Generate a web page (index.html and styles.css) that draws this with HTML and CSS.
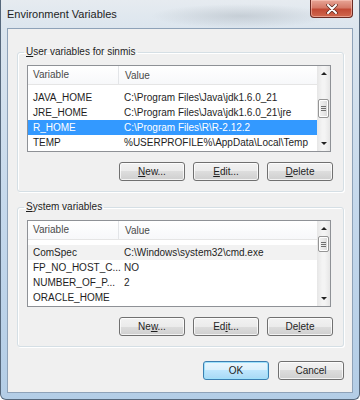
FILE: index.html
```html
<!DOCTYPE html>
<html lang="en">
<head>
  <meta charset="UTF-8" />
  <title>Environment Variables</title>
  <link rel="stylesheet" href="styles.css">
</head>
<body>
  <div class="window">
    <div class="titlebar">
      <span class="title">Environment Variables</span>
      <button class="close" title="Close">
        <svg width="12" height="10" viewBox="0 0 12 10">
          <path d="M2 1 L10 9 M10 1 L2 9" stroke="#5a2a20" stroke-width="3.4" stroke-linecap="round" />
          <path d="M2 1 L10 9 M10 1 L2 9" stroke="#fff" stroke-width="2" stroke-linecap="round" />
        </svg>
      </button>
    </div>

    <div class="client">
      <fieldset class="group">
        <legend><u>U</u>ser variables for sinmis</legend>
        <div class="list">
          <div class="list-body">
            <div class="header">
              <span class="col-var">Variable</span>
              <span class="col-val">Value</span>
            </div>
            <div class="row"><span class="col-var">JAVA_HOME</span><span class="col-val">C:\Program Files\Java\jdk1.6.0_21</span></div>
            <div class="row"><span class="col-var">JRE_HOME</span><span class="col-val">C:\Program Files\Java\jdk1.6.0_21\jre</span></div>
            <div class="row selected"><span class="col-var">R_HOME</span><span class="col-val">C:\Program Files\R\R-2.12.2</span></div>
            <div class="row"><span class="col-var">TEMP</span><span class="col-val">%USERPROFILE%\AppData\Local\Temp</span></div>
          </div>
          <div class="scrollbar">
            <span class="arrow up"></span>
            <div class="track track-mid"><span class="thumb"><i></i><i></i><i></i></span></div>
            <span class="arrow down"></span>
          </div>
        </div>
        <div class="buttons">
          <button class="btn"><u>N</u>ew...</button>
          <button class="btn"><u>E</u>dit...</button>
          <button class="btn"><u>D</u>elete</button>
        </div>
      </fieldset>

      <fieldset class="group">
        <legend><u>S</u>ystem variables</legend>
        <div class="list">
          <div class="list-body">
            <div class="header">
              <span class="col-var">Variable</span>
              <span class="col-val">Value</span>
            </div>
            <div class="row current"><span class="col-var">ComSpec</span><span class="col-val">C:\Windows\system32\cmd.exe</span></div>
            <div class="row"><span class="col-var">FP_NO_HOST_C...</span><span class="col-val">NO</span></div>
            <div class="row"><span class="col-var">NUMBER_OF_P...</span><span class="col-val">2</span></div>
            <div class="row"><span class="col-var">ORACLE_HOME</span><span class="col-val"></span></div>
          </div>
          <div class="scrollbar">
            <span class="arrow up"></span>
            <div class="track track-top"><span class="thumb"><i></i><i></i><i></i></span></div>
            <span class="arrow down"></span>
          </div>
        </div>
        <div class="buttons">
          <button class="btn">Ne<u>w</u>...</button>
          <button class="btn">Ed<u>i</u>t...</button>
          <button class="btn">De<u>l</u>ete</button>
        </div>
      </fieldset>

      <div class="dialog-buttons">
        <button class="btn default">OK</button>
        <button class="btn">Cancel</button>
      </div>
    </div>
  </div>
</body>
</html>
```

FILE: styles.css
```css
body {
  margin: 0;
  background: #fff;
  font-family: "Liberation Sans", Arial, sans-serif;
}

.window {
  width: 360px;
  height: 400px;
  box-sizing: border-box;
  border: 1px solid #56687c;
  border-top: none;
  border-radius: 0 0 6px 6px;
  background:
    radial-gradient(ellipse 90px 12px at 240px 16px, rgba(120, 130, 140, 0.25), transparent),
    linear-gradient(#e6ebf0 0px, #dbe5ee 30px, #c6d9ec 200px, #b3cde6 400px);
  display: flex;
  flex-direction: column;
}

.titlebar {
  height: 28px;
  display: flex;
  justify-content: space-between;
  align-items: flex-start;
  padding: 0 6px 0 6px;
}

.title {
  font-size: 11px;
  color: #1e1e1e;
  line-height: 28px;
}

.close {
  width: 43px;
  height: 18px;
  padding: 0;
  border: 1px solid #6b2a22;
  border-top: none;
  border-radius: 0 0 4px 4px;
  background: linear-gradient(#e8a596 0%, #d57a68 45%, #c24a35 55%, #d0684e 100%);
  box-shadow: inset 0 0 0 1px rgba(255, 210, 200, 0.5);
  display: flex;
  align-items: center;
  justify-content: center;
}

.client {
  flex: 1;
  margin: 0 6px 6px 6px;
  border: 1px solid #8ea2b8;
  background: #f0f0f0;
  padding: 16px 8px 0 9px;
  display: flex;
  flex-direction: column;
}

.group {
  margin: 0;
  padding: 6px 10px 10px 9px;
  border: 1px solid #d5dfe5;
  border-radius: 3px;
  box-shadow: inset 1px 1px 0 #fff, 1px 1px 0 #fff;
}

.group + .group {
  margin-top: 8px;
}

.group legend {
  margin-left: -3px;
  padding: 0 2px;
  font-size: 10px;
  line-height: 14px;
  color: #1e1e1e;
}

.list {
  height: 87px;
  box-sizing: border-box;
  border: 1px solid #8e9196;
  background: #fff;
  margin-right: 2px;
  display: flex;
}

.list-body {
  flex: 1;
  overflow: hidden;
  font-size: 10px;
  color: #1e1e1e;
}

.header {
  height: 18px;
  display: flex;
  align-items: center;
  border-bottom: 1px solid #e5e5e5;
  background: linear-gradient(#fff, #f7f8fa);
  color: #4a4a4a;
  margin-bottom: 5px;
}

.header .col-var {
  border-right: 1px solid #e3e5e8;
  height: 18px;
  line-height: 18px;
}

.row {
  height: 15px;
  display: flex;
  align-items: center;
  white-space: nowrap;
}

.col-var {
  width: 85px;
  padding-left: 5px;
  flex: none;
}

.col-val {
  padding-left: 6px;
}

.row.selected {
  background: #3399ff;
  color: #fff;
}

.row.current {
  background: #f2f2f2;
}

.scrollbar {
  width: 13px;
  flex: none;
  display: flex;
  flex-direction: column;
  background: linear-gradient(90deg, #e6e6e6, #f4f4f4 40%, #f4f4f4 60%, #e6e6e6);
}

.arrow {
  height: 15px;
  display: flex;
  align-items: center;
  justify-content: center;
}

.arrow::before {
  content: "";
  border-left: 3px solid transparent;
  border-right: 3px solid transparent;
}

.arrow.up::before {
  border-bottom: 3px solid #222;
}

.arrow.down::before {
  border-top: 3px solid #222;
}

.track {
  flex: 1;
  display: flex;
  flex-direction: column;
  padding: 0 1px;
}

.track-mid {
  justify-content: center;
}

.thumb {
  height: 19px;
  box-sizing: border-box;
  border: 1px solid #959595;
  border-radius: 2px;
  background: linear-gradient(90deg, #f3f3f3, #e8e8e8 50%, #d8d8d8);
  box-shadow: inset 0 0 0 1px #fff;
  display: flex;
  flex-direction: column;
  align-items: center;
  justify-content: center;
  gap: 1px;
}

.track-top .thumb {
  height: 16px;
}

.thumb i {
  width: 5px;
  height: 1px;
  background: #6f6f6f;
}

.buttons {
  margin-top: 10px;
  display: flex;
  justify-content: flex-end;
  gap: 8px;
}

.btn {
  width: 66px;
  height: 19px;
  padding: 0;
  border: 1px solid #707070;
  border-radius: 3px;
  background: linear-gradient(#f2f2f2 0%, #ebebeb 50%, #dddddd 50%, #cfcfcf 100%);
  box-shadow: inset 0 0 0 1px rgba(255, 255, 255, 0.75);
  font-family: "Liberation Sans", Arial, sans-serif;
  font-size: 10px;
  color: #1e1e1e;
}

.btn.default {
  border-color: #3c7fb1;
  background: linear-gradient(#eaf6fd 0%, #d9f0fc 50%, #bee6fd 50%, #a7d9f5 100%);
  box-shadow: inset 0 0 0 1px #9fe1fb;
}

.dialog-buttons {
  margin-top: 14px;
  display: flex;
  justify-content: flex-end;
  gap: 9px;
}
```
